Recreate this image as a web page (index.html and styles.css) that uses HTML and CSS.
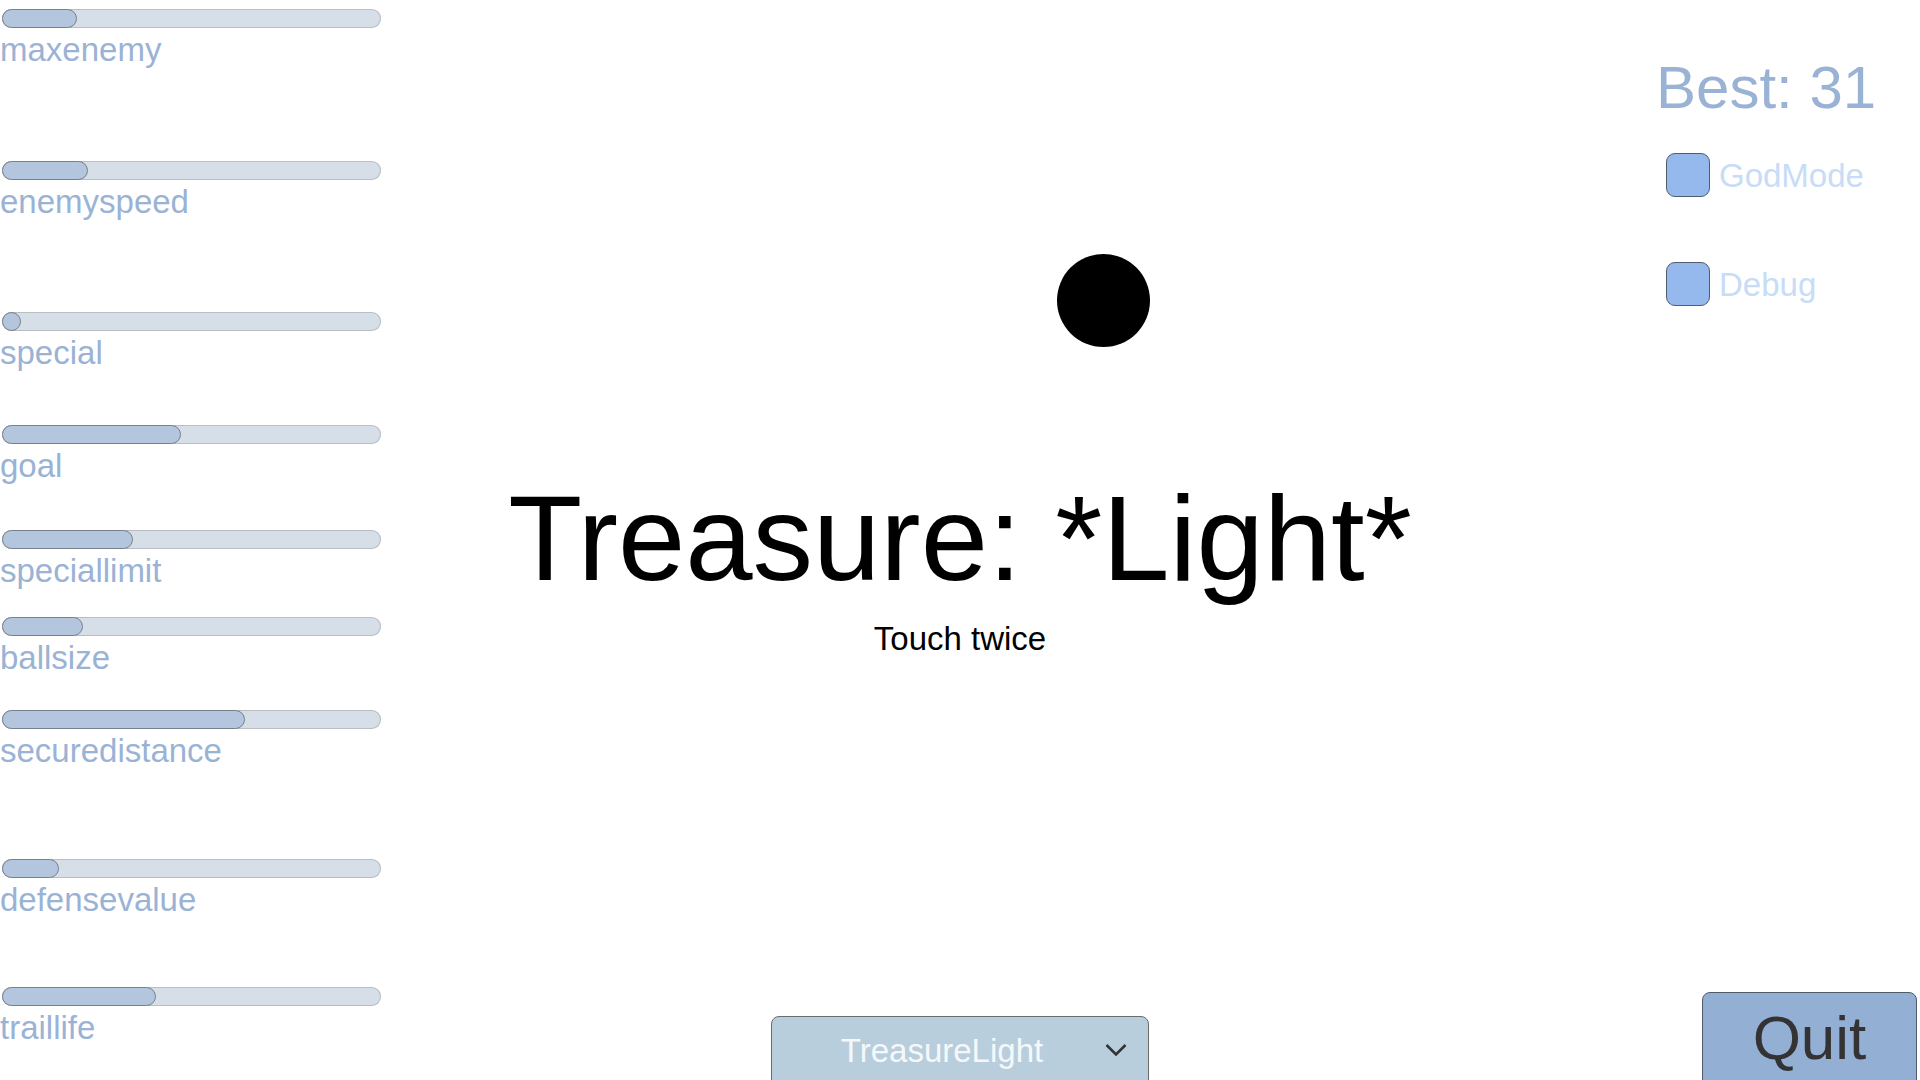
FILE: index.html
```html
<!DOCTYPE html>
<html>
<head>
<meta charset="utf-8">
<link rel="stylesheet" href="styles.css">
</head>
<body>
<div class="screen">
  <div class="sliders">
    <div class="slider"><div class="track"><div class="fill" style="width:75px"></div></div><div class="label">maxenemy</div></div>
    <div class="slider"><div class="track"><div class="fill" style="width:86px"></div></div><div class="label">enemyspeed</div></div>
    <div class="slider"><div class="track"><div class="fill" style="width:19px"></div></div><div class="label">special</div></div>
    <div class="slider"><div class="track"><div class="fill" style="width:179px"></div></div><div class="label">goal</div></div>
    <div class="slider"><div class="track"><div class="fill" style="width:131px"></div></div><div class="label">speciallimit</div></div>
    <div class="slider"><div class="track"><div class="fill" style="width:81px"></div></div><div class="label">ballsize</div></div>
    <div class="slider"><div class="track"><div class="fill" style="width:243px"></div></div><div class="label">securedistance</div></div>
    <div class="slider"><div class="track"><div class="fill" style="width:57px"></div></div><div class="label">defensevalue</div></div>
    <div class="slider"><div class="track"><div class="fill" style="width:154px"></div></div><div class="label">traillife</div></div>
  </div>

  <div class="center">
    <div class="title">Treasure: *Light*</div>
    <div class="subtitle">Touch twice</div>
    <div class="dropdown">
      <span class="dropdown-label">TreasureLight</span>
      <svg class="chevron" width="22" height="14" viewBox="0 0 22 14"><path d="M1.5 2 L11 11.5 L20.5 2" fill="none" stroke="#333" stroke-width="2.6"/></svg>
    </div>
  </div>

  <div class="side">
    <div class="best">Best: 31</div>
    <div class="toggle"><span class="box"></span><span class="toggle-label">GodMode</span></div>
    <div class="toggle debug"><span class="box"></span><span class="toggle-label">Debug</span></div>
    <div class="quit" role="button">Quit</div>
  </div>

  <div class="ball"></div>
</div>
</body>
</html>
```

FILE: styles.css
```css
html, body {
  margin: 0;
  padding: 0;
  background: #ffffff;
}

.screen {
  position: relative;
  width: 1920px;
  height: 1080px;
  overflow: hidden;
  display: grid;
  grid-template-columns: 480px 960px 480px;
  font-family: "Liberation Sans", Arial, sans-serif;
}

/* Left sliders */
.sliders {
  display: flex;
  flex-direction: column;
  padding: 9px 0 0 2px;
}

.slider {
  width: 379px;
}

.slider:nth-child(2) { margin-top: 93px; }
.slider:nth-child(3) { margin-top: 92px; }
.slider:nth-child(4) { margin-top: 54px; }
.slider:nth-child(5) { margin-top: 46px; }
.slider:nth-child(6) { margin-top: 28px; }
.slider:nth-child(7) { margin-top: 34px; }
.slider:nth-child(8) { margin-top: 90px; }
.slider:nth-child(9) { margin-top: 69px; }

.track {
  height: 19px;
  border-radius: 10px;
  background: #d6dee7;
  box-shadow: inset 0 0 0 1px #b9bec5;
}

.fill {
  box-sizing: border-box;
  height: 19px;
  min-width: 19px;
  border: 1px solid #77808d;
  border-radius: 10px;
  background: #b3c6de;
}

.label {
  margin: 3px 0 0 -2px;
  font-size: 33px;
  line-height: 37px;
  color: #9ab3d5;
  white-space: nowrap;
}

/* Center */
.center {
  display: flex;
  flex-direction: column;
  align-items: center;
}

.title {
  margin-top: 478px;
  font-size: 121px;
  line-height: 120px;
  color: #000;
  white-space: nowrap;
}

.subtitle {
  margin-top: 24px;
  font-size: 33px;
  line-height: 33px;
  color: #000;
}

.dropdown {
  position: relative;
  box-sizing: border-box;
  width: 378px;
  height: 84px;
  margin-top: auto;
  margin-bottom: -20px;
  padding: 17px 36px 0 0;
  background: #b9cedd;
  border: 1.5px solid #6b6b6b;
  border-radius: 8px;
  text-align: center;
}

.dropdown-label {
  font-size: 33px;
  line-height: 33px;
  color: #f5f8fa;
}

.chevron {
  position: absolute;
  right: 21px;
  top: 26px;
}

/* Right side */
.side {
  display: flex;
  flex-direction: column;
  align-items: flex-start;
  padding-left: 226px;
}

.best {
  margin: 58px 0 0 -10px;
  font-size: 60px;
  line-height: 60px;
  color: #9ab3d5;
  white-space: nowrap;
}

.toggle {
  display: flex;
  align-items: center;
  gap: 9px;
  margin-top: 35px;
}

.toggle.debug {
  margin-top: 65px;
}

.box {
  box-sizing: border-box;
  width: 44px;
  height: 44px;
  border: 1.5px solid #4f5d70;
  border-radius: 9px;
  background: #95b9ec;
}

.toggle-label {
  font-size: 33px;
  line-height: 33px;
  color: #c7dcf7;
}

.quit {
  box-sizing: border-box;
  width: 215px;
  height: 108px;
  margin: auto 0 -20px 36px;
  padding-top: 14px;
  background: #93afd3;
  border: 1.5px solid #4f5b6a;
  border-radius: 8px;
  font-size: 62px;
  line-height: 62px;
  color: #333333;
  text-align: center;
}

/* Ball on the play field */
.ball {
  position: absolute;
  left: 1057px;
  top: 254px;
  width: 93px;
  height: 93px;
  border-radius: 50%;
  background: #000;
}
```
